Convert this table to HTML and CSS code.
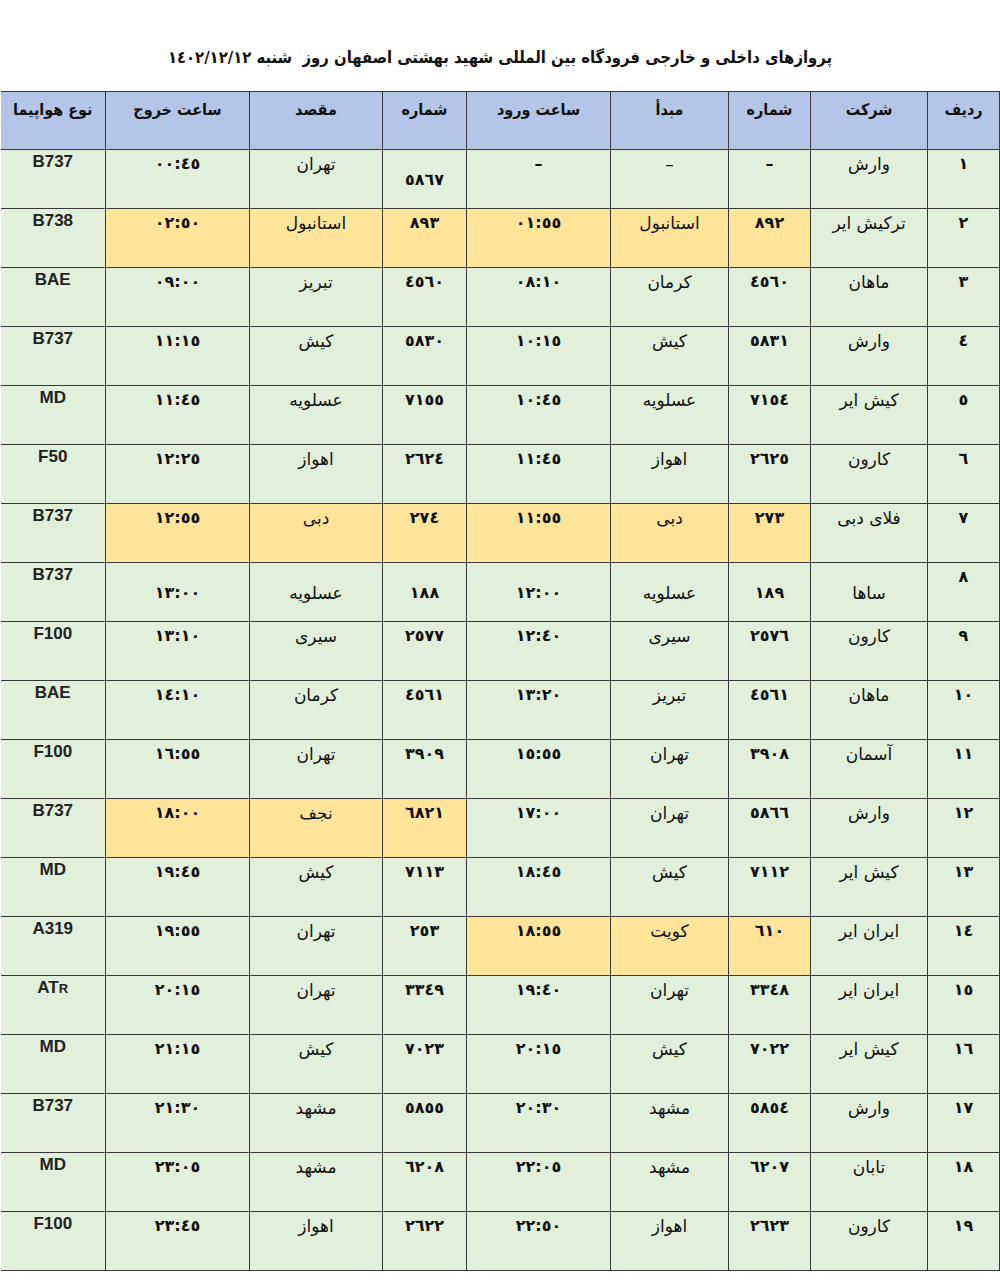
FILE: index.html
```html
<!DOCTYPE html>
<html lang="fa">
<head>
<meta charset="utf-8">
<title>پروازهای فرودگاه اصفهان</title>
<link rel="stylesheet" href="styles.css">
</head>
<body>
<div class="page" dir="rtl">
  <h1 class="title">پروازهای داخلی و خارجی فرودگاه بین المللی شهید بهشتی اصفهان روز&nbsp; شنبه ١٤٠٢/١٢/١٢</h1>
  <table class="flights">
    <colgroup>
      <col class="c-row"><col class="c-co"><col class="c-num"><col class="c-from"><col class="c-arr"><col class="c-num2"><col class="c-to"><col class="c-dep"><col class="c-type">
    </colgroup>
    <thead>
      <tr><th>ردیف</th><th>شرکت</th><th>شماره</th><th>مبدأ</th><th>ساعت ورود</th><th>شماره</th><th>مقصد</th><th>ساعت خروج</th><th>نوع هواپیما</th></tr>
    </thead>
    <tbody>
      <tr><td class="n">١</td><td class="w">وارش</td><td class="n">–</td><td class="w">–</td><td class="n">–</td><td class="n low">٥٨٦٧</td><td class="w">تهران</td><td class="n">٠٠:٤٥</td><td class="t">B737</td></tr>
      <tr><td class="n">٢</td><td class="w">ترکیش ایر</td><td class="n hl">٨٩٢</td><td class="w hl">استانبول</td><td class="n hl">٠١:٥٥</td><td class="n hl">٨٩٣</td><td class="w hl">استانبول</td><td class="n hl">٠٢:٥٠</td><td class="t">B738</td></tr>
      <tr><td class="n">٣</td><td class="w">ماهان</td><td class="n">٤٥٦٠</td><td class="w">کرمان</td><td class="n">٠٨:١٠</td><td class="n">٤٥٦٠</td><td class="w">تبریز</td><td class="n">٠٩:٠٠</td><td class="t">BAE</td></tr>
      <tr><td class="n">٤</td><td class="w">وارش</td><td class="n">٥٨٣١</td><td class="w">کیش</td><td class="n">١٠:١٥</td><td class="n">٥٨٣٠</td><td class="w">کیش</td><td class="n">١١:١٥</td><td class="t">B737</td></tr>
      <tr><td class="n">٥</td><td class="w">کیش ایر</td><td class="n">٧١٥٤</td><td class="w">عسلویه</td><td class="n">١٠:٤٥</td><td class="n">٧١٥٥</td><td class="w">عسلویه</td><td class="n">١١:٤٥</td><td class="t">MD</td></tr>
      <tr><td class="n">٦</td><td class="w">کارون</td><td class="n">٢٦٢٥</td><td class="w">اهواز</td><td class="n">١١:٤٥</td><td class="n">٢٦٢٤</td><td class="w">اهواز</td><td class="n">١٢:٢٥</td><td class="t">F50</td></tr>
      <tr><td class="n">٧</td><td class="w">فلای دبی</td><td class="n hl">٢٧٣</td><td class="w hl">دبی</td><td class="n hl">١١:٥٥</td><td class="n hl">٢٧٤</td><td class="w hl">دبی</td><td class="n hl">١٢:٥٥</td><td class="t">B737</td></tr>
      <tr><td class="n">٨</td><td class="w low">ساها</td><td class="n low">١٨٩</td><td class="w low">عسلویه</td><td class="n low">١٢:٠٠</td><td class="n low">١٨٨</td><td class="w low">عسلویه</td><td class="n low">١٣:٠٠</td><td class="t">B737</td></tr>
      <tr><td class="n">٩</td><td class="w">کارون</td><td class="n">٢٥٧٦</td><td class="w">سیری</td><td class="n">١٢:٤٠</td><td class="n">٢٥٧٧</td><td class="w">سیری</td><td class="n">١٣:١٠</td><td class="t">F100</td></tr>
      <tr><td class="n">١٠</td><td class="w">ماهان</td><td class="n">٤٥٦١</td><td class="w">تبریز</td><td class="n">١٣:٢٠</td><td class="n">٤٥٦١</td><td class="w">کرمان</td><td class="n">١٤:١٠</td><td class="t">BAE</td></tr>
      <tr><td class="n">١١</td><td class="w">آسمان</td><td class="n">٣٩٠٨</td><td class="w">تهران</td><td class="n">١٥:٥٥</td><td class="n">٣٩٠٩</td><td class="w">تهران</td><td class="n">١٦:٥٥</td><td class="t">F100</td></tr>
      <tr><td class="n">١٢</td><td class="w">وارش</td><td class="n">٥٨٦٦</td><td class="w">تهران</td><td class="n">١٧:٠٠</td><td class="n hl">٦٨٢١</td><td class="w hl">نجف</td><td class="n hl">١٨:٠٠</td><td class="t">B737</td></tr>
      <tr><td class="n">١٣</td><td class="w">کیش ایر</td><td class="n">٧١١٢</td><td class="w">کیش</td><td class="n">١٨:٤٥</td><td class="n">٧١١٣</td><td class="w">کیش</td><td class="n">١٩:٤٥</td><td class="t">MD</td></tr>
      <tr><td class="n">١٤</td><td class="w">ایران ایر</td><td class="n hl">٦١٠</td><td class="w hl">کویت</td><td class="n hl">١٨:٥٥</td><td class="n">٢٥٣</td><td class="w">تهران</td><td class="n">١٩:٥٥</td><td class="t">A319</td></tr>
      <tr><td class="n">١٥</td><td class="w">ایران ایر</td><td class="n">٣٣٤٨</td><td class="w">تهران</td><td class="n">١٩:٤٠</td><td class="n">٣٣٤٩</td><td class="w">تهران</td><td class="n">٢٠:١٥</td><td class="t">AT<span class="sc">R</span></td></tr>
      <tr><td class="n">١٦</td><td class="w">کیش ایر</td><td class="n">٧٠٢٢</td><td class="w">کیش</td><td class="n">٢٠:١٥</td><td class="n">٧٠٢٣</td><td class="w">کیش</td><td class="n">٢١:١٥</td><td class="t">MD</td></tr>
      <tr><td class="n">١٧</td><td class="w">وارش</td><td class="n">٥٨٥٤</td><td class="w">مشهد</td><td class="n">٢٠:٣٠</td><td class="n">٥٨٥٥</td><td class="w">مشهد</td><td class="n">٢١:٣٠</td><td class="t">B737</td></tr>
      <tr><td class="n">١٨</td><td class="w">تابان</td><td class="n">٦٢٠٧</td><td class="w">مشهد</td><td class="n">٢٢:٠٥</td><td class="n">٦٢٠٨</td><td class="w">مشهد</td><td class="n">٢٣:٠٥</td><td class="t">MD</td></tr>
      <tr><td class="n">١٩</td><td class="w">کارون</td><td class="n">٢٦٢٣</td><td class="w">اهواز</td><td class="n">٢٢:٥٠</td><td class="n">٢٦٢٢</td><td class="w">اهواز</td><td class="n">٢٣:٤٥</td><td class="t">F100</td></tr>
    </tbody>
  </table>
</div>
</body>
</html>
```

FILE: styles.css
```css
html, body {
  margin: 0;
  padding: 0;
  background: #ffffff;
}

.page {
  width: 1000px;
  font-family: "DejaVu Sans", sans-serif;
  color: #111111;
}

.title {
  margin: 0;
  height: 91px;
  box-sizing: border-box;
  padding-top: 45px;
  font-family: "DejaVu Sans Condensed", "DejaVu Sans", sans-serif;
  font-stretch: condensed;
  font-size: 16.5px;
  line-height: 26px;
  font-weight: bold;
  text-align: center;
  color: #111;
}

.flights {
  width: 999px;
  table-layout: fixed;
  border-collapse: collapse;
}

.c-row { width: 72px; }
.c-co { width: 117px; }
.c-num { width: 82px; }
.c-from { width: 118px; }
.c-arr { width: 144px; }
.c-num2 { width: 84px; }
.c-to { width: 133px; }
.c-dep { width: 144px; }
.c-type { width: 105px; }

.flights th,
.flights td {
  border: 1.5px solid #383838;
  text-align: center;
  vertical-align: top;
  padding: 0;
  overflow: hidden;
  white-space: nowrap;
}

.flights th:last-child,
.flights td:last-child {
  border-left: none;
}

.flights th {
  background: #b4c6e7;
  height: 58px;
  box-sizing: border-box;
  padding-top: 5px;
  font-family: "DejaVu Sans Condensed", "DejaVu Sans", sans-serif;
  font-stretch: condensed;
  font-size: 16px;
  line-height: 26px;
  font-weight: bold;
}

.flights td {
  background: #e2efda;
  height: 59px;
  box-sizing: border-box;
  padding-top: 2px;
  font-size: 16px;
  line-height: 24px;
}

.flights td.n {
  font-weight: bold;
  font-size: 16px;
}

.flights td.w {
  font-size: 17px;
}

.flights td.t {
  font-family: "Liberation Sans", Arial, sans-serif;
  font-weight: bold;
  font-size: 17px;
  line-height: 22px;
  padding-top: 1px;
  color: #222;
}

.flights td.low {
  padding-top: 18px;
}

.flights td.hl {
  background: #ffe59a;
}

.sc {
  font-size: 13px;
}
```
